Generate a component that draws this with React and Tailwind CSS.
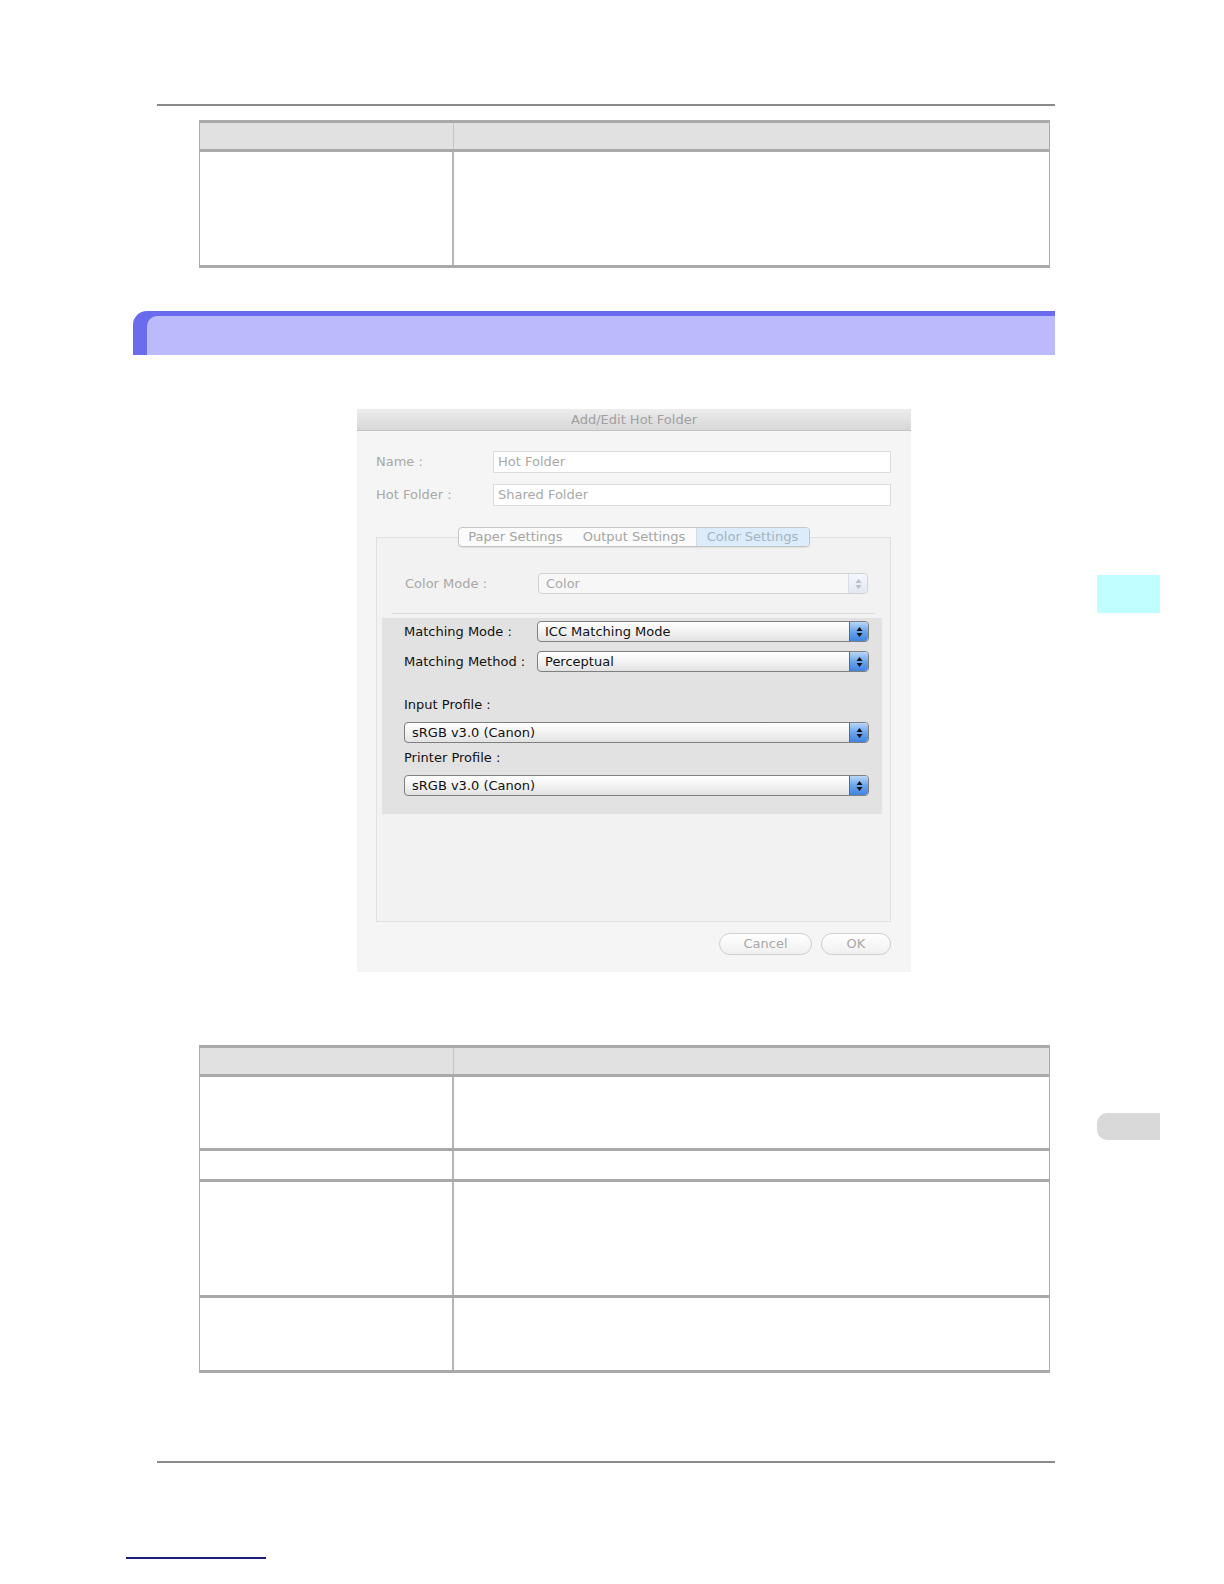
import React from "react";

const font = { fontFamily: '"DejaVu Sans", "Liberation Sans", sans-serif' };

function Arrows({ disabled }) {
  return (
    <div
      className={
        "flex h-full w-[19px] items-center justify-center rounded-r-[4px] border-l " +
        (disabled
          ? "border-[#d6dde6] bg-linear-to-b from-[#f4f7fb] to-[#e3e9f1]"
          : "border-[#3f6db5] bg-linear-to-b from-[#b9d6f7] via-[#6aa5ec] to-[#3f84e0]")
      }
    >
      <svg width="7" height="12" viewBox="0 0 7 12">
        <path d="M3.5 1 L6.5 5 L0.5 5 Z" fill={disabled ? "#b4bcc6" : "#111"} />
        <path d="M3.5 11 L6.5 7 L0.5 7 Z" fill={disabled ? "#b4bcc6" : "#111"} />
      </svg>
    </div>
  );
}

function Select({ value, disabled, className = "" }) {
  return (
    <div
      className={
        "flex h-[21px] items-stretch rounded-[4px] border " +
        (disabled
          ? "border-[#d2d2d2] bg-[#f7f7f7] text-[#a9a9a9] "
          : "border-[#7f7f7f] bg-linear-to-b from-white via-[#f3f3f3] to-[#e2e2e2] text-[#111] ") +
        className
      }
    >
      <div className="flex-1 truncate pl-[7px] text-[13px] leading-[19px]">{value}</div>
      <Arrows disabled={disabled} />
    </div>
  );
}

function Dialog() {
  return (
    <div className="ml-[357px] mt-[54px] flex h-[563px] w-[554px] flex-col overflow-hidden bg-[#f5f5f5]" style={font}>
      <div className="h-[22px] border-b border-[#c4c4c4] bg-linear-to-b from-[#ededed] to-[#d7d7d7] text-center text-[13px] leading-[22px] text-[#a0a0a0]">
        Add/Edit Hot Folder
      </div>

      <div className="mt-[20px] flex flex-col gap-[11px] pl-[19px] pr-[20px]">
        {[
          ["Name :", "Hot Folder"],
          ["Hot Folder :", "Shared Folder"],
        ].map(([l, v]) => (
          <div key={l} className="flex items-center">
            <div className="w-[117px] text-[13px] leading-[16px] text-[#a8a8a8]">{l}</div>
            <div className="h-[22px] flex-1 border border-[#dcdcdc] bg-white pl-[4px] text-[13px] leading-[20px] text-[#a9a9a9]">
              {v}
            </div>
          </div>
        ))}
      </div>

      <div className="ml-[19px] mr-[20px] mt-[31px] flex h-[385px] flex-col border border-[#e0e0e0] bg-[#f2f2f2]">
        <div className="-mt-[11px] flex justify-center">
          <div className="flex h-[20px] overflow-hidden rounded-[4px] border border-[#c6c6c6] bg-[#fbfbfb] text-[13px] leading-[18px] text-[#a5a5a5] shadow-[0_1px_1px_rgba(0,0,0,0.08)]">
            <div className="w-[114px] text-center">Paper Settings</div>
            <div className="w-[123px] text-center">Output Settings</div>
            <div className="w-[113px] border-l border-[#cfdbe6] bg-[#dcecfa] text-center text-[#a3b3c2]">Color Settings</div>
          </div>
        </div>

        <div className="mt-[26px] flex items-center pl-[28px] pr-[22px]">
          <div className="w-[133px] text-[13px] leading-[16px] text-[#a8a8a8]">Color Mode :</div>
          <Select value="Color" disabled className="flex-1" />
        </div>

        <div className="mx-[15px] mt-[19px] h-px bg-[#dadada]" />

        <div className="ml-[5px] mr-[8px] mt-[4px] flex h-[196px] flex-col bg-[#e2e2e2] pl-[22px] pr-[13px] pt-[3px]">
          <div className="flex items-center">
            <div className="w-[133px] text-[13px] leading-[16px] text-[#111]">Matching Mode :</div>
            <Select value="ICC Matching Mode" className="flex-1" />
          </div>
          <div className="mt-[9px] flex items-center">
            <div className="w-[133px] text-[13px] leading-[16px] text-[#111]">Matching Method :</div>
            <Select value="Perceptual" className="flex-1" />
          </div>
          <div className="mt-[25px] text-[13px] leading-[16px] text-[#111]">Input Profile :</div>
          <Select value="sRGB v3.0 (Canon)" className="mt-[9px]" />
          <div className="mt-[7px] text-[13px] leading-[16px] text-[#111]">Printer Profile :</div>
          <Select value="sRGB v3.0 (Canon)" className="mt-[9px]" />
        </div>
      </div>

      <div className="mt-[11px] flex justify-end gap-[9px] pr-[20px]">
        <div className="h-[22px] w-[93px] rounded-full border border-[#cfcfcf] bg-linear-to-b from-white to-[#f0f0f0] text-center text-[13px] leading-[20px] text-[#a8a8a8]">
          Cancel
        </div>
        <div className="h-[22px] w-[70px] rounded-full border border-[#cfcfcf] bg-linear-to-b from-white to-[#f0f0f0] text-center text-[13px] leading-[20px] text-[#a8a8a8]">
          OK
        </div>
      </div>
    </div>
  );
}

function Table({ rows, className = "" }) {
  return (
    <div className={"ml-[199px] w-[851px] border-x border-[#ababab] " + className}>
      <div className="grid h-[32px] grid-cols-[254px_1fr] border-y-[3px] border-[#a9a9a9] bg-[#e1e1e1]">
        <div className="border-r border-[#c4c4c4]" />
        <div />
      </div>
      {rows.map((h, i) => (
        <div
          key={i}
          className="grid grid-cols-[254px_1fr] border-b-[3px] border-[#a9a9a9]"
          style={{ height: h }}
        >
          <div className="border-r-2 border-[#b5b5b5]" />
          <div />
        </div>
      ))}
    </div>
  );
}

export default function App() {
  return (
    <div className="flex h-[1584px] w-[1224px] overflow-hidden bg-white">
      <div className="w-[1097px] shrink-0 pt-[104px]">
        <div className="ml-[157px] h-[2px] w-[898px] bg-[#8a8a8a]" />

        <Table rows={[116]} className="mt-[14px]" />

        <div className="ml-[133px] mt-[43px] w-[922px] rounded-tl-[14px] bg-[#6b6bee] pl-[14px] pt-[5px]">
          <div className="h-[39px] rounded-tl-[10px] bg-[#babafc]" />
        </div>

        <Dialog />

        <Table rows={[74, 31, 116, 75]} className="mt-[73px]" />

        <div className="ml-[157px] mt-[88px] h-[2px] w-[898px] bg-[#8a8a8a]" />

        <div className="ml-[126px] mt-[94px] h-[2px] w-[140px] bg-[#1c1c7e]" />
      </div>

      <div className="flex w-[63px] shrink-0 flex-col pt-[575px]">
        <div className="h-[38px] bg-[#bfffff]" />
        <div className="mt-[500px] h-[27px] rounded-l-[10px] bg-[#d9d9d9]" />
      </div>
    </div>
  );
}
